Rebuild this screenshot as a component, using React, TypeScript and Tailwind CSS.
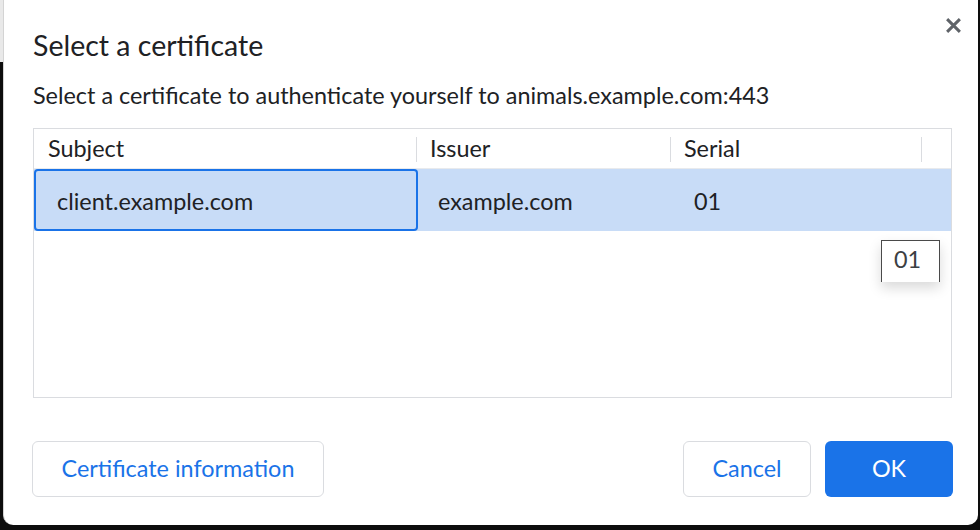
import { useState } from 'react';

const font = { fontFamily: 'Lato, "Open Sans", sans-serif' };

export default function App() {
  const [selected] = useState(0);

  return (
    <div className="w-[980px] h-[530px] bg-[#0d0d0d] overflow-hidden" style={font}>
      <div className="flex h-[525px]">
        {/* thin strip left of the dialog */}
        <div className="w-[3px] flex flex-col">
          <div className="h-[62px] bg-[#e9e9e9]" />
          <div className="flex-1 bg-[#0d0d0d]" />
        </div>

        {/* dialog */}
        <div className="relative w-[975px] bg-white rounded-b-[10px] border-l border-[#d4d4d4] text-[#202124]">
          <button className="absolute right-[16px] top-[16px] w-[18px] h-[18px] flex items-center justify-center text-[#5f6368]">
            <svg width="17" height="17" viewBox="0 0 16 16">
              <path d="M2 2L14 14M14 2L2 14" stroke="currentColor" strokeWidth="2.8" strokeLinecap="butt" />
            </svg>
          </button>

          <div className="pl-[29px] pr-[24px] pt-[28px]">
            <h1 className="text-[28.5px] leading-[34px] font-normal">Select a certificate</h1>
            <p className="mt-[20px] text-[23.4px] leading-[26px]">
              Select a certificate to authenticate yourself to animals.example.com:443
            </p>

            {/* table */}
            <div className="mt-[20px] w-[919px] h-[270px] border border-[#dadce0] relative">
              <div className="flex h-[40px] pt-px border-b border-[#e8eaed] text-[23.4px] items-center">
                <div className="w-[383px] pl-[14px] h-[25px] flex items-center border-r border-[#dadce0]">Subject</div>
                <div className="w-[254px] pl-[13px] h-[25px] flex items-center border-r border-[#dadce0]">Issuer</div>
                <div className="w-[251px] pl-[13px] h-[25px] flex items-center border-r border-[#dadce0]">Serial</div>
              </div>

              {selected === 0 && (
                <div className="flex h-[62px] bg-[#c8dcf7] text-[23.4px] items-center">
                  <div className="w-[384px] h-full pl-[21px] pt-[4px] flex items-center border-2 border-[#1a73e8] rounded-[4px]">
                    client.example.com
                  </div>
                  <div className="w-[276px] pl-[20px] pt-[4px]">example.com</div>
                  <div className="flex-1 pt-[4px]">01</div>
                </div>
              )}

              {/* tooltip */}
              <div className="absolute left-[847px] top-[111px] w-[59px] h-[42px] bg-white border border-[#4a4a4a] border-b-0 shadow-[0_6px_12px_rgba(0,0,0,0.15)] text-[23.4px] leading-[30px] text-[#3c4043] pl-[12px] pt-[3px]">
                01
              </div>
            </div>
          </div>

          {/* footer buttons */}
          <div className="flex items-center justify-between pl-[28px] pr-[25px] mt-[43px]">
            <button className="h-[56px] w-[292px] rounded-[6px] border border-[#dadce0] text-[#1a73e8] text-[23.4px] bg-white">
              Certificate information
            </button>
            <div className="flex gap-[14px]">
              <button className="h-[56px] w-[128px] rounded-[6px] border border-[#dadce0] text-[#1a73e8] text-[23.4px] bg-white">
                Cancel
              </button>
              <button className="h-[56px] w-[128px] rounded-[6px] bg-[#1a73e8] text-white text-[23.4px]">
                OK
              </button>
            </div>
          </div>
        </div>
        <div className="flex-1" />
      </div>
    </div>
  );
}
